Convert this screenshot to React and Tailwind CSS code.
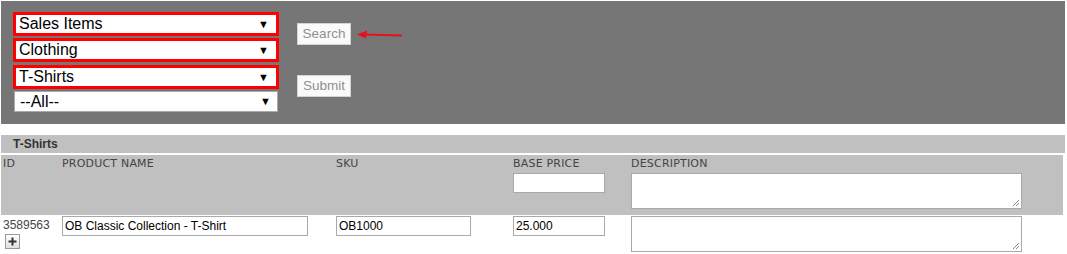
import React from 'react';

const Select = ({ label, marked }) => (
  <div
    className={
      marked
        ? 'flex items-center justify-between w-[266px] h-[24px] border-[3px] border-[#ff0000] bg-white pl-[3px] pr-[7px]'
        : 'flex items-center justify-between w-[264px] h-[21px] ml-[1px] border border-[#a9a9a9] bg-white pl-[5px] pr-[6px]'
    }
  >
    <span className="text-[16px] leading-none text-black">{label}</span>
    <span className="text-[11px] leading-none text-black">▼</span>
  </div>
);

const Btn = ({ children }) => (
  <div className="w-[54px] h-[22px] flex items-center justify-center bg-[#fafafa] border border-[#d4d4d4] text-[13.5px] text-[#909090]">
    {children}
  </div>
);

const Field = ({ w, value = '' }) => (
  <div className={`${w} h-[20px] bg-white border border-[#a9a9a9] flex items-center px-[2px] text-[12px] text-black`}>
    {value}
  </div>
);

const Area = () => (
  <div className="relative w-[391px] h-[36px] bg-white border border-[#a9a9a9]">
    <svg className="absolute right-[1px] bottom-[1px]" width="8" height="8" viewBox="0 0 8 8">
      <path d="M7 1 L1 7 M7 4 L4 7" stroke="#888" strokeWidth="1" />
    </svg>
  </div>
);

const App = () => {
  return (
    <div className="w-[1067px] h-[254px] bg-white pt-[1px] pl-[1px] overflow-hidden" style={{ fontFamily: '"Liberation Sans", Arial, sans-serif' }}>
      <div className="w-[1064px] h-[123px] bg-[#767676] flex pl-[12px] pt-[11px]">
        <div className="flex flex-col">
          <Select label="Sales Items" marked />
          <div className="mt-[2px]"><Select label="Clothing" marked /></div>
          <div className="mt-[3px]"><Select label="T-Shirts" marked /></div>
          <div className="mt-[2px]"><Select label="--All--" /></div>
        </div>
        <div className="flex flex-col ml-[18px]">
          <div className="flex items-center mt-[11px]">
            <Btn>Search</Btn>
            <svg className="ml-[5px] mt-[2px]" width="48" height="12" viewBox="0 0 48 12">
              <path d="M8 5.5 L46 6.5" stroke="#e8101a" strokeWidth="2" />
              <path d="M1 5.5 L11 1.5 L10 9.5 Z" fill="#e8101a" />
            </svg>
          </div>
          <div className="mt-[30px]">
            <Btn>Submit</Btn>
          </div>
        </div>
      </div>

      <div className="mt-[11px] w-[1064px] h-[18px] bg-[#c0c0c0] flex items-center pl-[12px]">
        <span className="text-[12px] font-bold text-[#333]">T-Shirts</span>
      </div>

      <div
        className="mt-[2px] w-[1062px] h-[60px] bg-[#c0c0c0] grid grid-cols-[57px_274px_177px_118px_1fr] text-[11px] leading-[12px] text-[#444] tracking-[0.2px]"
        style={{ fontFamily: '"DejaVu Sans", Verdana, sans-serif' }}
      >
        <div className="pl-[2px] pt-[3px]">ID</div>
        <div className="pl-[4px] pt-[3px]">PRODUCT NAME</div>
        <div className="pl-[4px] pt-[3px]">SKU</div>
        <div className="pl-[4px] pt-[3px] flex flex-col gap-[3px]">
          <span>BASE PRICE</span>
          <Field w="w-[92px]" />
        </div>
        <div className="pl-[4px] pt-[3px] flex flex-col gap-[3px]">
          <span>DESCRIPTION</span>
          <Area />
        </div>
      </div>

      <div className="w-[1062px] grid grid-cols-[57px_274px_177px_118px_1fr] pt-[1px]">
        <div className="pl-[2px] flex flex-col">
          <span className="text-[12px] text-[#444] leading-[14px] mt-[2px]">3589563</span>
          <div className="mt-[2px] ml-[2px] w-[15px] h-[15px] border border-[#999] bg-gradient-to-b from-white to-[#e0e0e0] flex items-center justify-center">
            <svg width="9" height="9" viewBox="0 0 9 9">
              <path d="M4.5 0.5 V8.5 M0.5 4.5 H8.5" stroke="#333" strokeWidth="2" />
            </svg>
          </div>
        </div>
        <div className="pl-[4px]"><Field w="w-[246px]" value="OB Classic Collection - T-Shirt" /></div>
        <div className="pl-[4px]"><Field w="w-[135px]" value="OB1000" /></div>
        <div className="pl-[4px]"><Field w="w-[92px]" value="25.000" /></div>
        <div className="pl-[4px]"><Area /></div>
      </div>
    </div>
  );
};

export default App;
